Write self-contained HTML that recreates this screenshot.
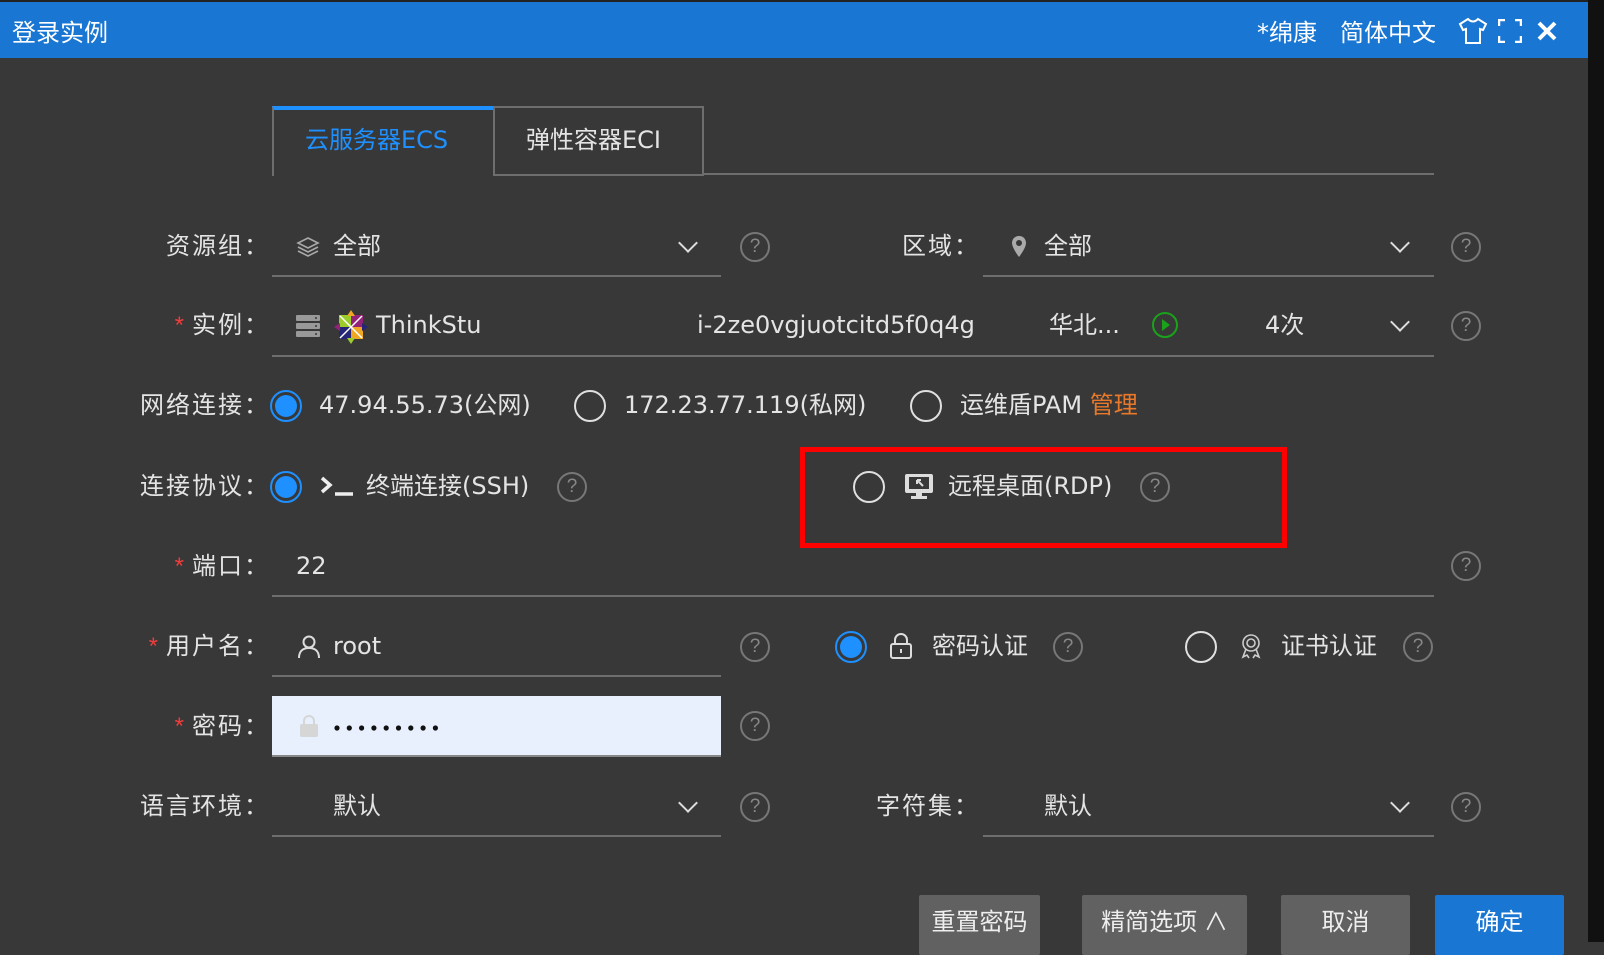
<!DOCTYPE html>
<html><head><meta charset="utf-8">
<style>
*{margin:0;padding:0;box-sizing:border-box}
body{width:1604px;height:942px;overflow:hidden;background:#383838;font-family:"DejaVu Sans","Noto Sans CJK SC",sans-serif;color:#e4e4e4;position:relative}
.a{position:absolute;white-space:nowrap}
.t{font-size:24px;line-height:30px;margin-top:-1px}
.lbl{position:absolute;right:1334px;font-size:24px;letter-spacing:2px;line-height:30px;white-space:nowrap;font-family:"Liberation Sans","Noto Sans CJK SC",sans-serif}
.star{color:#f03c3c;margin-right:6px}
.ul{position:absolute;height:2px;background:#6e6e6e}
.help{position:absolute;width:30px;height:30px;border:2px solid #777;border-radius:50%;color:#888;font-size:19px;line-height:26px;text-align:center;font-family:"Liberation Sans",sans-serif}
.rad{position:absolute;width:32px;height:32px;border:2px solid #e0e0e0;border-radius:50%}
.rad.on{border-color:#1e90ff}
.rad.on::after{content:"";position:absolute;left:3px;top:3px;width:22px;height:22px;border-radius:50%;background:#1e90ff}
.chev{position:absolute;width:14px;height:14px;border-right:2px solid #ddd;border-bottom:2px solid #ddd;transform:rotate(45deg)}
.btn{position:absolute;top:895px;height:60px;background:#616161;color:#eee;font-size:24px;text-align:center;line-height:56px;border-radius:2px;font-family:"Liberation Sans","Noto Sans CJK SC",sans-serif}
</style></head><body>
<div class="a" style="left:0;top:0;width:1604px;height:2px;background:#222"></div>
<div class="a" style="left:0;top:2px;width:1588px;height:56px;background:#1976d2"></div>
<div class="a" style="left:1588px;top:0;width:16px;height:942px;background:#111"></div>
<div class="a" style="left:12px;top:13px;font-size:24px;color:#fff">登录实例</div>
<div class="a" style="left:1257px;top:13px;font-size:24px;color:#fff">*绵康</div>
<div class="a" style="left:1340px;top:13px;font-size:24px;color:#fff">简体中文</div>
<svg class="a" style="left:1458px;top:17px" width="30" height="28" viewBox="0 0 30 28"><path d="M10 2 L2 7 L5 13 L8 12 L8 26 L22 26 L22 12 L25 13 L28 7 L20 2 Q15 7 10 2Z" fill="none" stroke="#fff" stroke-width="2"/></svg>
<svg class="a" style="left:1498px;top:19px" width="24" height="24" viewBox="0 0 24 24" fill="none" stroke="#fff" stroke-width="2.5"><path d="M1 7V1h6M17 1h6v6M23 17v6h-6M7 23H1v-6"/></svg>
<svg class="a" style="left:1536px;top:20px" width="22" height="22" viewBox="0 0 22 22" stroke="#fff" stroke-width="4"><path d="M3 3L19 19M19 3L3 19"/></svg>

<div class="a" style="left:272px;top:106px;width:221px;height:70px;border-top:4px solid #1e90ff;border-left:2px solid #6e6e6e;background:#383838"></div>
<div class="a t" style="left:305px;top:126px;color:#1e90ff;font-size:24px">云服务器ECS</div>
<div class="a" style="left:493px;top:106px;width:211px;height:70px;border:2px solid #6e6e6e"></div>
<div class="a t" style="left:526px;top:126px;font-size:24px">弹性容器ECI</div>
<div class="ul" style="left:703px;top:173px;width:731px"></div>

<div class="lbl" style="top:232px">资源组：</div>
<svg class="a" style="left:296px;top:236px" width="24" height="22" viewBox="0 0 24 22" fill="none" stroke="#aaa" stroke-width="1.6"><path d="M12 2L22 7L12 12L2 7Z"/><path d="M2 11L12 16L22 11"/><path d="M2 15L12 20L22 15"/></svg>
<div class="a t" style="left:333px;top:232px">全部</div>
<div class="chev" style="left:681px;top:236px"></div>
<div class="ul" style="left:272px;top:275px;width:449px"></div>
<div class="help" style="left:740px;top:232px">?</div>
<div class="a" style="left:902px;top:232px;font-size:24px;letter-spacing:2px;line-height:30px;font-family:'Liberation Sans','Noto Sans CJK SC',sans-serif">区域：</div>
<svg class="a" style="left:1010px;top:235px" width="18" height="24" viewBox="0 0 18 24"><path d="M9 1C4 1 2 5 2 8C2 13 9 22 9 22C9 22 16 13 16 8C16 5 14 1 9 1Z" fill="#aaa"/><circle cx="9" cy="8" r="3" fill="#383838"/></svg>
<div class="a t" style="left:1044px;top:232px">全部</div>
<div class="chev" style="left:1393px;top:236px"></div>
<div class="ul" style="left:983px;top:275px;width:451px"></div>
<div class="help" style="left:1451px;top:232px">?</div>

<div class="lbl" style="top:311px"><span class="star">*</span>实例：</div>
<svg class="a" style="left:296px;top:315px" width="24" height="22" viewBox="0 0 24 22" fill="#999"><rect x="0" y="0" width="24" height="6" rx="1"/><rect x="0" y="8" width="24" height="6" rx="1"/><rect x="0" y="16" width="24" height="6" rx="1"/><circle cx="20" cy="3" r="1" fill="#383838"/><circle cx="20" cy="11" r="1" fill="#383838"/><circle cx="20" cy="19" r="1" fill="#383838"/></svg>
<svg class="a" style="left:334px;top:310px" width="34" height="34" viewBox="0 0 34 34"><rect x="5" y="5" width="12" height="12" fill="#9ccd2a"/><rect x="17" y="5" width="12" height="12" fill="#932279"/><rect x="5" y="17" width="12" height="12" fill="#262577"/><rect x="17" y="17" width="12" height="12" fill="#efa724"/><path d="M17 0L21 6H13Z" fill="#efa724"/><path d="M17 34L21 28H13Z" fill="#9ccd2a"/><path d="M0 17L6 13V21Z" fill="#932279"/><path d="M34 17L28 13V21Z" fill="#262577"/><path d="M6 6L28 28M28 6L6 28" stroke="#fff" stroke-width="1.5"/></svg>
<div class="a t" style="left:376px;top:311px">ThinkStu</div>
<div class="a t" style="left:697px;top:311px">i-2ze0vgjuotcitd5f0q4g</div>
<div class="a t" style="left:1049px;top:311px">华北...</div>
<svg class="a" style="left:1151px;top:311px" width="28" height="28" viewBox="0 0 28 28"><circle cx="14" cy="14" r="12" fill="none" stroke="#1aa21a" stroke-width="2"/><path d="M11 8L19 14L11 20Z" fill="#1aa21a"/></svg>
<div class="a t" style="left:1265px;top:311px">4次</div>
<div class="chev" style="left:1393px;top:315px"></div>
<div class="ul" style="left:272px;top:355px;width:1162px"></div>
<div class="help" style="left:1451px;top:311px">?</div>

<div class="lbl" style="top:391px">网络连接：</div>
<div class="rad on" style="left:270px;top:390px"></div>
<div class="a t" style="left:319px;top:391px">47.94.55.73(公网)</div>
<div class="rad" style="left:574px;top:390px"></div>
<div class="a t" style="left:624px;top:391px">172.23.77.119(私网)</div>
<div class="rad" style="left:910px;top:390px"></div>
<div class="a t" style="left:960px;top:391px">运维盾PAM <span style="color:#e8792a">管理</span></div>

<div class="lbl" style="top:472px">连接协议：</div>
<div class="rad on" style="left:270px;top:471px"></div>
<svg class="a" style="left:320px;top:475px" width="34" height="22" viewBox="0 0 34 22" fill="none" stroke="#eee" stroke-width="3.5"><path d="M2 3L10 10L2 17"/><path d="M15 19H33"/></svg>
<div class="a t" style="left:366px;top:472px">终端连接(SSH)</div>
<div class="help" style="left:557px;top:472px">?</div>
<div class="a" style="left:800px;top:447px;width:487px;height:101px;border:5px solid #f00"></div>
<div class="rad" style="left:853px;top:471px"></div>
<svg class="a" style="left:905px;top:474px" width="28" height="26" viewBox="0 0 28 26"><rect x="0" y="0" width="28" height="19" rx="2" fill="#ddd"/><rect x="4" y="3" width="20" height="12" fill="#383838"/><path d="M12 6L18 12M12 6V10M12 6H16" stroke="#ddd" stroke-width="2" fill="none"/><rect x="11" y="19" width="6" height="3" fill="#ddd"/><rect x="6" y="22" width="16" height="3" fill="#ddd"/></svg>
<div class="a t" style="left:948px;top:472px">远程桌面(RDP)</div>
<div class="help" style="left:1140px;top:472px">?</div>

<div class="lbl" style="top:552px"><span class="star">*</span>端口：</div>
<div class="a t" style="left:296px;top:552px">22</div>
<div class="ul" style="left:272px;top:595px;width:1162px"></div>
<div class="help" style="left:1451px;top:551px">?</div>

<div class="lbl" style="top:632px"><span class="star">*</span>用户名：</div>
<svg class="a" style="left:298px;top:635px" width="22" height="24" viewBox="0 0 22 24" fill="none" stroke="#ddd" stroke-width="2"><circle cx="11" cy="7" r="5.5"/><path d="M1 23C1 16 5 13 11 13C17 13 21 16 21 23"/></svg>
<div class="a t" style="left:333px;top:632px">root</div>
<div class="ul" style="left:272px;top:675px;width:449px"></div>
<div class="help" style="left:740px;top:632px">?</div>
<div class="rad on" style="left:835px;top:631px"></div>
<svg class="a" style="left:890px;top:633px" width="22" height="26" viewBox="0 0 22 26" fill="none" stroke="#ddd" stroke-width="2"><path d="M5 11V7a6 6 0 0 1 12 0V11"/><rect x="1" y="11" width="20" height="14" rx="2"/><path d="M11 16V20"/></svg>
<div class="a t" style="left:932px;top:632px">密码认证</div>
<div class="help" style="left:1053px;top:632px">?</div>
<div class="rad" style="left:1185px;top:631px"></div>
<svg class="a" style="left:1239px;top:633px" width="24" height="26" viewBox="0 0 24 26" fill="none" stroke="#ccc" stroke-width="1.6"><circle cx="12" cy="10" r="8"/><circle cx="12" cy="10" r="4"/><path d="M7 16L4 24L8 22L10 25M17 16L20 24L16 22L14 25"/></svg>
<div class="a t" style="left:1281px;top:632px">证书认证</div>
<div class="help" style="left:1403px;top:632px">?</div>

<div class="lbl" style="top:712px"><span class="star">*</span>密码：</div>
<div class="a" style="left:272px;top:696px;width:449px;height:61px;background:#e8f0fe;border-bottom:2px solid #888"></div>
<svg class="a" style="left:299px;top:714px" width="20" height="24" viewBox="0 0 20 24"><path d="M5 10V7a5 5 0 0 1 10 0V10" fill="none" stroke="#d6d6d6" stroke-width="2"/><rect x="1" y="10" width="18" height="13" rx="2" fill="#d6d6d6"/></svg>
<svg class="a" style="left:333px;top:724px" width="110" height="8" viewBox="0 0 110 8" fill="#111"><circle cx="4" cy="4" r="2.6"/><circle cx="16.3" cy="4" r="2.6"/><circle cx="28.6" cy="4" r="2.6"/><circle cx="40.9" cy="4" r="2.6"/><circle cx="53.2" cy="4" r="2.6"/><circle cx="65.5" cy="4" r="2.6"/><circle cx="77.8" cy="4" r="2.6"/><circle cx="90.1" cy="4" r="2.6"/><circle cx="102.4" cy="4" r="2.6"/></svg>
<div class="help" style="left:740px;top:711px">?</div>

<div class="lbl" style="top:792px">语言环境：</div>
<div class="a t" style="left:333px;top:792px">默认</div>
<div class="chev" style="left:681px;top:796px"></div>
<div class="ul" style="left:272px;top:835px;width:449px"></div>
<div class="help" style="left:740px;top:792px">?</div>
<div class="a" style="left:876px;top:792px;font-size:24px;letter-spacing:2px;line-height:30px;font-family:'Liberation Sans','Noto Sans CJK SC',sans-serif">字符集：</div>
<div class="a t" style="left:1044px;top:792px">默认</div>
<div class="chev" style="left:1393px;top:796px"></div>
<div class="ul" style="left:983px;top:835px;width:451px"></div>
<div class="help" style="left:1451px;top:792px">?</div>

<div class="btn" style="left:919px;width:121px">重置密码</div>
<div class="btn" style="left:1082px;width:165px">精简选项 ∧</div>
<div class="btn" style="left:1281px;width:129px">取消</div>
<div class="btn" style="left:1435px;width:129px;background:#1976d2;color:#fff">确定</div>
</body></html>
